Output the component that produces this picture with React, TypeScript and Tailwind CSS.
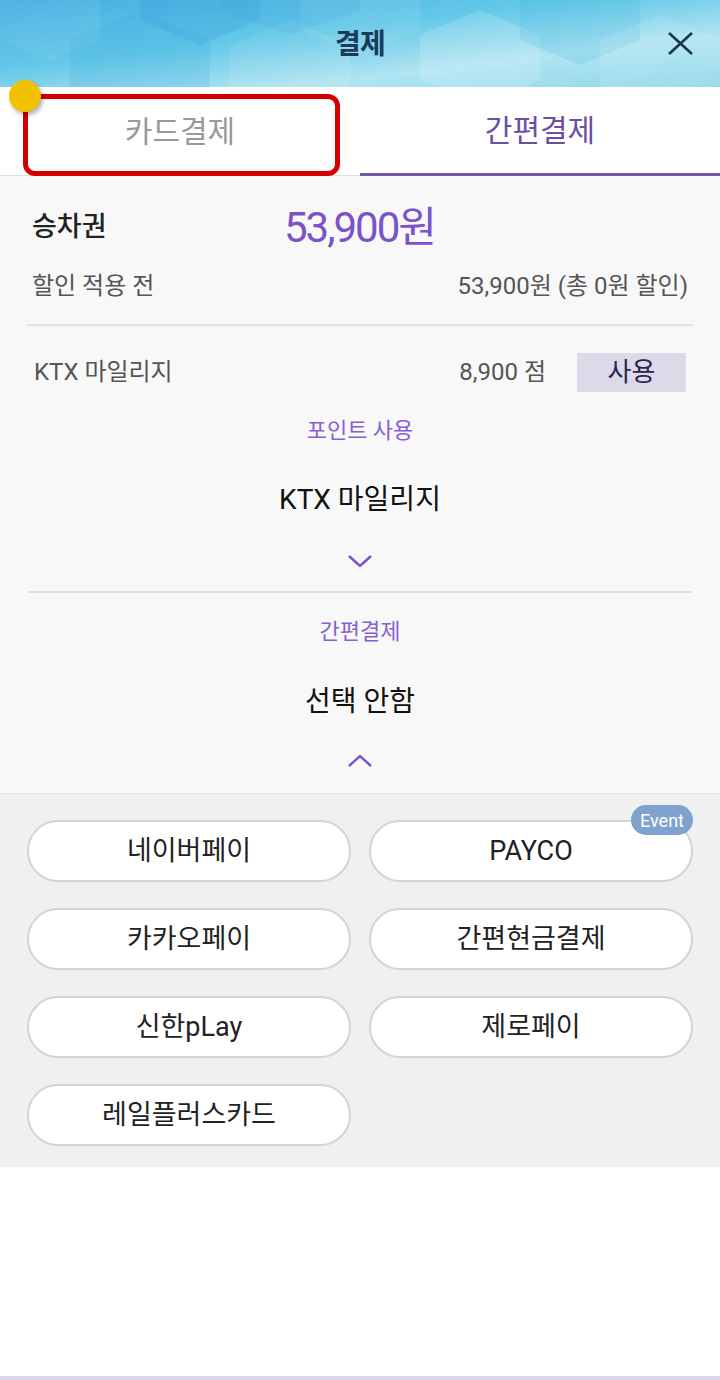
import React from 'react';

const payMethods = ['네이버페이', 'PAYCO', '카카오페이', '간편현금결제', '신한pLay', '제로페이', '레일플러스카드'];

function Chevron({ up }: { up?: boolean }) {
  return (
    <svg width="24" height="12" viewBox="0 0 24 12" className={up ? 'rotate-180' : ''}>
      <path d="M1 1 L12 11 L23 1" fill="none" stroke="#7b55c8" strokeWidth="2.4" />
    </svg>
  );
}

function HeaderPattern() {
  return (
    <svg className="absolute inset-0" width="720" height="87" viewBox="0 0 720 87" preserveAspectRatio="none">
      <defs>
        <linearGradient id="hdr" x1="0" y1="0" x2="1" y2="1">
          <stop offset="0" stopColor="#45aee2" />
          <stop offset="0.4" stopColor="#64c8e8" />
          <stop offset="0.7" stopColor="#b0e4f1" />
          <stop offset="1" stopColor="#8fd7ec" />
        </linearGradient>
      </defs>
      <rect width="720" height="87" fill="url(#hdr)" />
      <polygon points="70,40 140,10 210,40 210,90 140,120 70,90" fill="#3aa6dc" opacity="0.18" />
      <polygon points="140,-20 200,-45 260,-20 260,20 200,45 140,20" fill="#2f8fd0" opacity="0.18" />
      <polygon points="230,45 290,20 350,45 350,95 290,120 230,95" fill="#ffffff" opacity="0.08" />
      <polygon points="300,-10 360,-35 420,-10 420,30 360,55 300,30" fill="#ffffff" opacity="0.08" />
      <polygon points="420,35 480,10 540,35 540,80 480,105 420,80" fill="#ffffff" opacity="0.15" />
      <polygon points="220,-30 290,-55 360,-30 360,10 290,35 220,10" fill="#3a9fd6" opacity="0.15" />
      <polygon points="520,-5 580,-30 640,-5 640,40 580,65 520,40" fill="#4ab9e0" opacity="0.2" />
      <polygon points="600,40 660,15 720,40 720,85 660,110 600,85" fill="#ffffff" opacity="0.1" />
      <polygon points="0,-10 50,-30 100,-10 100,40 50,60 0,40" fill="#ffffff" opacity="0.06" />
    </svg>
  );
}

export default function App() {
  return (
    <div className="w-[720px] h-[1380px] bg-white flex flex-col font-[family-name:Roboto,'Noto_Sans_CJK_KR',sans-serif] overflow-hidden">
      {/* Header */}
      <div className="relative h-[87px] shrink-0 flex items-center justify-center">
        <HeaderPattern />
        <span className="relative mt-[3px] text-[28px] font-semibold text-[#1b3a5c] tracking-tight">결제</span>
        <svg className="absolute right-[27px] top-[32px]" width="25" height="23" viewBox="0 0 25 23">
          <path d="M1 1 L24 22 M24 1 L1 22" stroke="#1c3450" strokeWidth="2.6" fill="none" />
        </svg>
      </div>

      {/* Tabs */}
      <div className="relative h-[89px] shrink-0 flex bg-white">
        <div className="flex-1 flex items-center justify-center border-b border-[#dedede] text-[30px] text-[#999999]">
          카드결제
        </div>
        <div className="flex-1 flex items-center justify-center border-b-[3px] border-[#7558ac] text-[30px] text-[#6b4fa6]">
          간편결제
        </div>
        <div className="absolute left-[23px] top-[7px] w-[317px] h-[82px] border-[5px] border-[#d40000] rounded-[12px]" />
        <div className="absolute left-[9px] top-[-7px] w-[32px] h-[32px] rounded-full bg-[#f2c200] shadow-[2px_3px_4px_rgba(0,0,0,0.3)]" />
      </div>

      {/* Summary */}
      <div className="shrink-0 bg-[#f8f8f8] border-b border-[#e6e6e6] flex flex-col pb-[22px]">
        <div className="mt-[25px] h-[52px] flex items-center px-[32px]">
          <span className="w-[252px] text-[27px] font-medium text-[#222222]">승차권</span>
          <span className="text-[42px] text-[#7a52c9] tracking-[-2px]">53,900원</span>
        </div>
        <div className="mt-[13px] h-[40px] flex items-center justify-between pl-[32px] pr-[32px] text-[24px] text-[#555555]">
          <span>할인 적용 전</span>
          <span>53,900원 (총 0원 할인)</span>
        </div>
        <div className="mt-[18px] mx-[27px] h-[2px] bg-[#e2e2e2]" />
        <div className="mt-[26px] h-[40px] flex items-center pl-[34px] pr-[34px] text-[24px] text-[#555555]">
          <span className="flex-1">KTX 마일리지</span>
          <span>8,900 점</span>
          <span className="ml-[31px] w-[109px] h-[39px] flex items-center justify-center bg-[#dcdae8] text-[26px] text-[#2d2450]">
            사용
          </span>
        </div>
        <div className="mt-[20px] h-[36px] flex items-center justify-center text-[22px] text-[#8a5fd4]">
          포인트 사용
        </div>
        <div className="mt-[34px] h-[36px] flex items-center justify-center text-[28px] text-[#111111]">
          KTX 마일리지
        </div>
        <div className="mt-[33px] h-[20px] flex items-center justify-center">
          <Chevron />
        </div>
        <div className="mt-[20px] mx-[27px] h-[2px] bg-[#e2e2e2]" />
        <div className="mt-[20px] h-[36px] flex items-center justify-center text-[22px] text-[#8a5fd4]">
          간편결제
        </div>
        <div className="mt-[35px] h-[36px] flex items-center justify-center text-[28px] text-[#111111]">
          선택 안함
        </div>
        <div className="mt-[31px] h-[20px] flex items-center justify-center">
          <Chevron up />
        </div>
      </div>

      {/* Easy pay options */}
      <div className="shrink-0 bg-[#f0f0f0] grid grid-cols-2 gap-x-[18px] gap-y-[26px] px-[27px] pt-[26px] pb-[21px]">
        {payMethods.map((m) => (
          <div
            key={m}
            className="relative h-[62px] rounded-full bg-white border-2 border-[#d4d4d4] flex items-center justify-center text-[27px] text-[#222222]"
          >
            {m}
            {m === 'PAYCO' && (
              <span className="absolute right-[-2px] top-[-17px] h-[30px] px-[9px] rounded-full bg-[#7fa2cf] text-white text-[18px] flex items-center">
                Event
              </span>
            )}
          </div>
        ))}
      </div>

      <div className="flex-1 bg-white" />
      <div className="h-[4px] shrink-0 bg-[#d8d6e8]" />
    </div>
  );
}
